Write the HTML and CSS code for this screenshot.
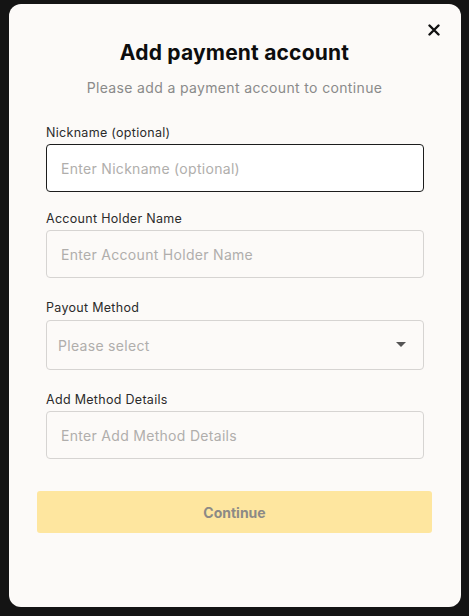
FILE: index.html
```html
<!DOCTYPE html>
<html lang="en">
<head>
    <meta charset="UTF-8">
    <meta name="viewport" content="width=device-width, initial-scale=1.0">
    <title>Add payment account</title>
    <link rel="stylesheet" href="styles.css">
</head>
<body>
    <div class="modal">
        <button type="button" class="close" aria-label="Close">
            <svg width="12" height="12" viewBox="0 0 12 12"><path d="M1.5 1.5 L10.5 10.5 M10.5 1.5 L1.5 10.5" stroke="#111" stroke-width="2.4" stroke-linecap="round"/></svg>
        </button>
        <h1 class="title">Add payment account</h1>
        <p class="subtitle">Please add a payment account to continue</p>

        <form class="form">
            <div class="field">
                <label for="nickname">Nickname (optional)</label>
                <input type="text" id="nickname" class="input focused" placeholder="Enter Nickname (optional)">
            </div>
            <div class="field">
                <label for="holder">Account Holder Name</label>
                <input type="text" id="holder" class="input" placeholder="Enter Account Holder Name">
            </div>
            <div class="field">
                <label for="method">Payout Method</label>
                <div class="select">
                    <span>Please select</span>
                    <svg width="10" height="6" viewBox="0 0 10 6"><path d="M0 0 H10 L5 5 Z" fill="#555"/></svg>
                </div>
            </div>
            <div class="field">
                <label for="details">Add Method Details</label>
                <input type="text" id="details" class="input" placeholder="Enter Add Method Details">
            </div>
        </form>

        <button type="button" class="continue">Continue</button>
    </div>
</body>
</html>
```

FILE: styles.css
```css
body {
    margin: 0;
    padding: 4px 8px 9px 9px;
    background: #141414;
    font-family: "Inter", "Liberation Sans", sans-serif;
}

.modal {
    position: relative;
    box-sizing: border-box;
    width: 452px;
    height: 603px;
    background: #fcfaf8;
    border-radius: 12px;
    padding: 36px 29px 0 28px;
}

.close {
    position: absolute;
    top: 20px;
    right: 21px;
    border: none;
    background: none;
    padding: 0;
    width: 12px;
    height: 12px;
    display: flex;
}

.title {
    margin: 0;
    text-align: center;
    font-size: 21px;
    font-weight: 700;
    color: #0d0d0d;
    letter-spacing: 0.2px;
}

.subtitle {
    margin: 14px 0 0;
    text-align: center;
    font-size: 14px;
    color: #8a8a8a;
    letter-spacing: 0.35px;
}

.form {
    margin-top: 29px;
    padding: 0 8px 0 9px;
    display: flex;
    flex-direction: column;
}

.field {
    display: flex;
    flex-direction: column;
}

.field + .field {
    margin-top: 22px;
}

.field:nth-child(2) {
    margin-top: 19px;
}

label {
    font-size: 12.5px;
    color: #2b2b2b;
    margin-bottom: 4px;
    letter-spacing: 0.3px;
}

.input {
    box-sizing: border-box;
    height: 48px;
    border: 1px solid #d6d4d2;
    border-radius: 4px;
    background: transparent;
    padding: 0 14px;
    font-family: inherit;
    font-size: 14px;
    letter-spacing: 0.3px;
    color: #333;
    outline: none;
}

.input.focused {
    border-color: #1d1d1d;
    background: #fff;
}

.input::placeholder {
    color: #b0aeac;
}

.select {
    box-sizing: border-box;
    height: 50px;
    margin-top: 1px;
    border: 1px solid #d6d4d2;
    border-radius: 4px;
    padding: 0 17px 0 11px;
    display: flex;
    align-items: center;
    justify-content: space-between;
    font-size: 14px;
    letter-spacing: 0.3px;
    color: #b0aeac;
}

.continue {
    display: block;
    width: 100%;
    margin-top: 32px;
    height: 42px;
    border: none;
    border-radius: 3px;
    background: #fee69f;
    color: #8c8a86;
    font-family: inherit;
    font-size: 14px;
    font-weight: 700;
}
```
